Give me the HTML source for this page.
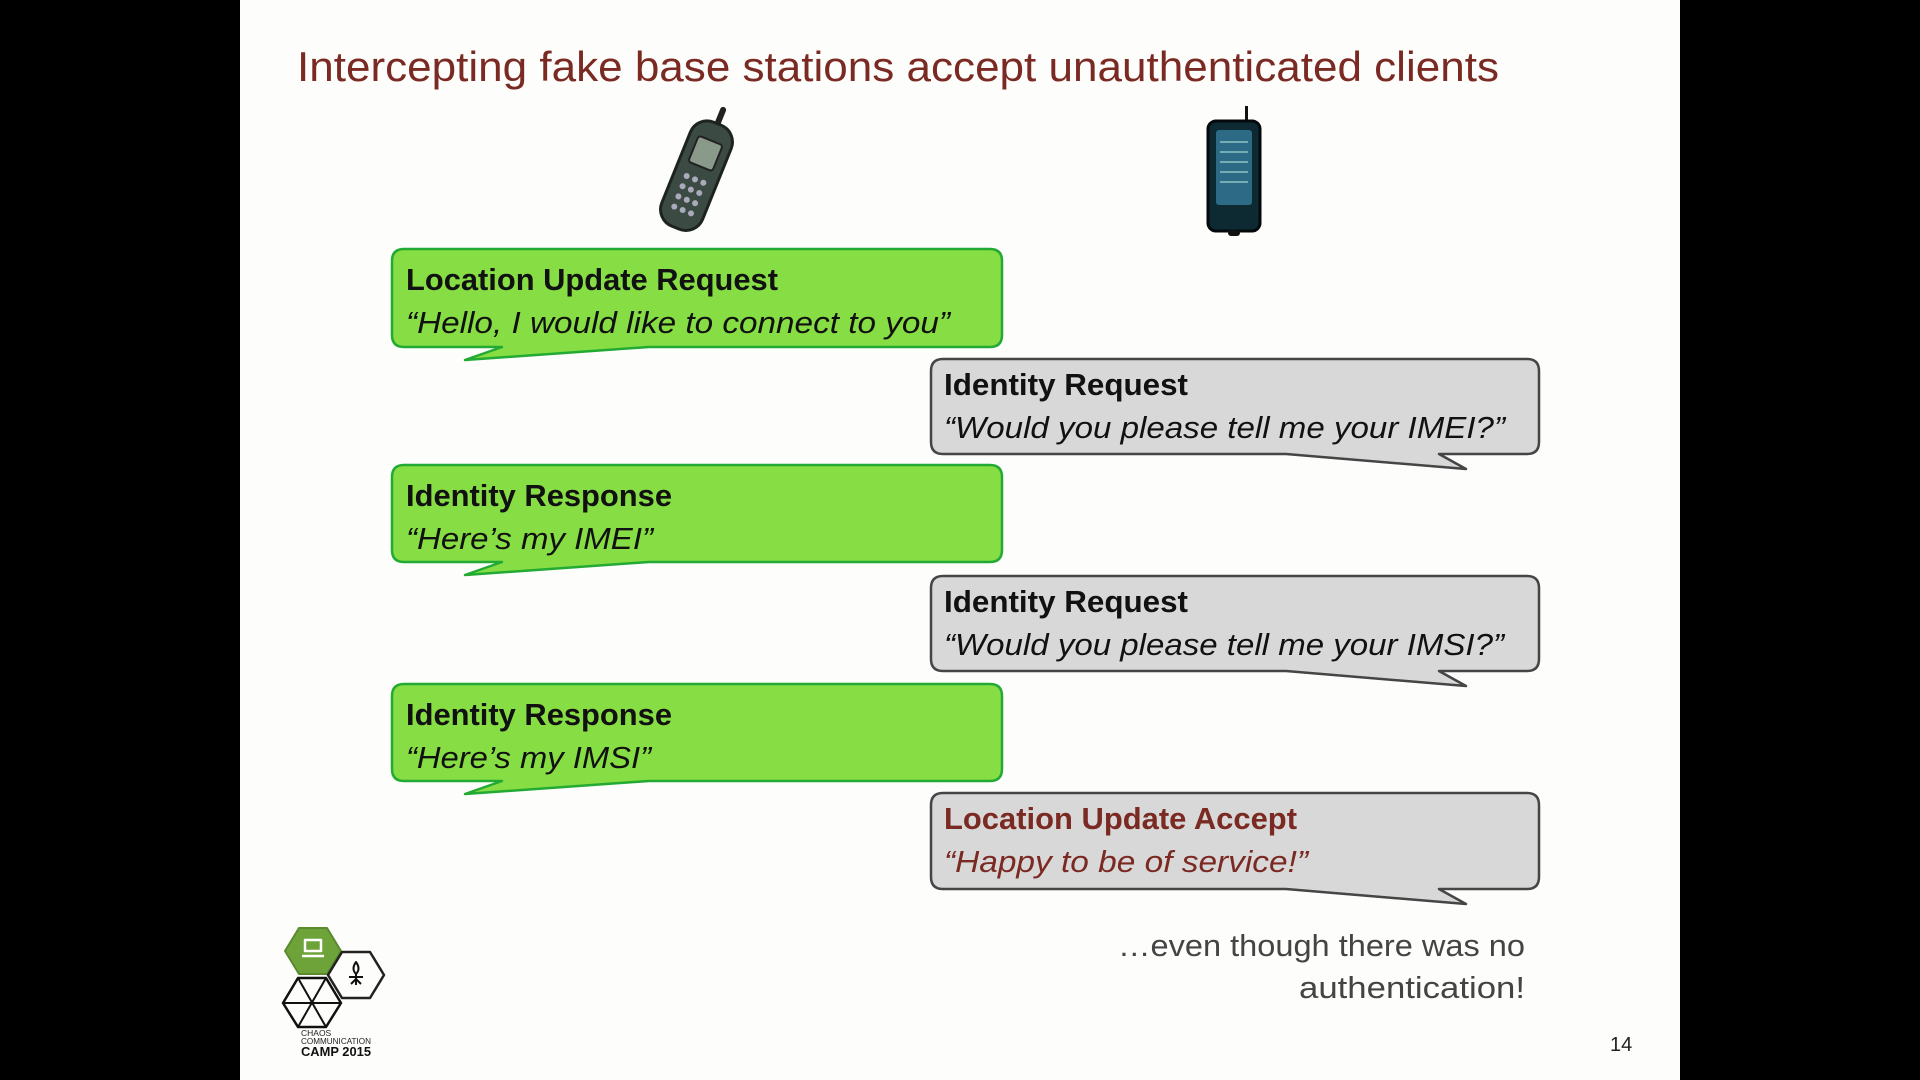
<!DOCTYPE html>
<html><head><meta charset="utf-8"><style>
html,body{margin:0;padding:0;background:#000;width:1920px;height:1080px;overflow:hidden}
svg{display:block}
</style></head><body>
<svg width="1920" height="1080" viewBox="0 0 1920 1080" xmlns="http://www.w3.org/2000/svg" font-family="Liberation Sans, sans-serif">
<rect x="0" y="0" width="1920" height="1080" fill="#000"/>
<rect x="240" y="0" width="1440" height="1080" fill="#fdfdfb"/>
<text x="297" y="81" font-size="42" fill="#7a2a22" textLength="1202" lengthAdjust="spacingAndGlyphs">Intercepting fake base stations accept unauthenticated clients</text>

<g transform="translate(698,172) rotate(22)">
 <rect x="-3" y="-70" width="6" height="30" rx="3" fill="#222"/>
 <rect x="-22" y="-52" width="44" height="112" rx="18" fill="#3c4a44" stroke="#1d2420" stroke-width="3"/>
 <rect x="-13" y="-34" width="26" height="28" rx="3" fill="#8a9a8a" stroke="#222" stroke-width="2"/>
 <g fill="#aab">
  <circle cx="-9" cy="8" r="3"/><circle cx="0" cy="8" r="3"/><circle cx="9" cy="8" r="3"/>
  <circle cx="-9" cy="19" r="3"/><circle cx="0" cy="19" r="3"/><circle cx="9" cy="19" r="3"/>
  <circle cx="-9" cy="30" r="3"/><circle cx="0" cy="30" r="3"/><circle cx="9" cy="30" r="3"/>
  <circle cx="-9" cy="41" r="3"/><circle cx="0" cy="41" r="3"/><circle cx="9" cy="41" r="3"/>
 </g>
</g>
<rect x="1245" y="106" width="3" height="18" fill="#111"/>
<rect x="1208" y="121" width="52" height="110" rx="8" fill="#0d2a33" stroke="#05090b" stroke-width="3"/>
<rect x="1216" y="130" width="36" height="75" rx="3" fill="#2d6a86"/>
<g stroke="#cfe" stroke-width="1.5" opacity=".6">
 <line x1="1220" y1="142" x2="1248" y2="142"/><line x1="1220" y1="152" x2="1248" y2="152"/><line x1="1220" y1="162" x2="1248" y2="162"/><line x1="1220" y1="172" x2="1248" y2="172"/><line x1="1220" y1="182" x2="1248" y2="182"/>
</g>
<rect x="1228" y="230" width="12" height="6" rx="3" fill="#111"/>

<g fill="#86dd44" stroke="#22aa33" stroke-width="2.5" stroke-linejoin="round">
 <path d="M404,249 H990 Q1002,249 1002,261 V335 Q1002,347 990,347 H649 L465,360 L502,347 H404 Q392,347 392,335 V261 Q392,249 404,249 Z"/>
 <path d="M404,465 H990 Q1002,465 1002,477 V550 Q1002,562 990,562 H649 L465,575 L502,562 H404 Q392,562 392,550 V477 Q392,465 404,465 Z"/>
 <path d="M404,684 H990 Q1002,684 1002,696 V769 Q1002,781 990,781 H649 L465,794 L502,781 H404 Q392,781 392,769 V696 Q392,684 404,684 Z"/>
</g>
<g fill="#d8d8d8" stroke="#454545" stroke-width="2.5" stroke-linejoin="round">
 <path d="M943,359 H1527 Q1539,359 1539,371 V442 Q1539,454 1527,454 H1439 L1466,469 L1286,454 H943 Q931,454 931,442 V371 Q931,359 943,359 Z"/>
 <path d="M943,576 H1527 Q1539,576 1539,588 V659 Q1539,671 1527,671 H1439 L1466,686 L1286,671 H943 Q931,671 931,659 V588 Q931,576 943,576 Z"/>
 <path d="M943,793 H1527 Q1539,793 1539,805 V877 Q1539,889 1527,889 H1439 L1466,904 L1286,889 H943 Q931,889 931,877 V805 Q931,793 943,793 Z"/>
</g>

<g font-size="31" fill="#111">
 <text x="406" y="290" font-weight="bold" textLength="372" lengthAdjust="spacingAndGlyphs">Location Update Request</text>
 <text x="406" y="333" font-style="italic" textLength="544" lengthAdjust="spacingAndGlyphs">“Hello, I would like to connect to you”</text>
 <text x="944" y="395" font-weight="bold" textLength="244" lengthAdjust="spacingAndGlyphs">Identity Request</text>
 <text x="944" y="438" font-style="italic" textLength="561" lengthAdjust="spacingAndGlyphs">“Would you please tell me your IMEI?”</text>
 <text x="406" y="506" font-weight="bold" textLength="266" lengthAdjust="spacingAndGlyphs">Identity Response</text>
 <text x="406" y="549" font-style="italic" textLength="247" lengthAdjust="spacingAndGlyphs">“Here’s my IMEI”</text>
 <text x="944" y="612" font-weight="bold" textLength="244" lengthAdjust="spacingAndGlyphs">Identity Request</text>
 <text x="944" y="655" font-style="italic" textLength="560" lengthAdjust="spacingAndGlyphs">“Would you please tell me your IMSI?”</text>
 <text x="406" y="725" font-weight="bold" textLength="266" lengthAdjust="spacingAndGlyphs">Identity Response</text>
 <text x="406" y="768" font-style="italic" textLength="245" lengthAdjust="spacingAndGlyphs">“Here’s my IMSI”</text>
 <text x="944" y="829" font-weight="bold" fill="#7a2a22" textLength="353" lengthAdjust="spacingAndGlyphs">Location Update Accept</text>
 <text x="944" y="872" font-style="italic" fill="#7a2a22" textLength="364" lengthAdjust="spacingAndGlyphs">“Happy to be of service!”</text>
</g>

<g font-size="31" fill="#444">
 <text x="1118" y="956" textLength="407" lengthAdjust="spacingAndGlyphs">…even though there was no</text>
 <text x="1299" y="998" textLength="226" lengthAdjust="spacingAndGlyphs">authentication!</text>
</g>
<text x="1610" y="1051" font-size="20" fill="#222">14</text>

<g stroke-linejoin="round">
 <polygon points="299,928 327,928 341,951 327,974 299,974 285,951" fill="#6ea33a" stroke="#5a8a2c" stroke-width="2"/>
 <rect x="305" y="940" width="16" height="11" fill="none" stroke="#fff" stroke-width="2.5"/>
 <line x1="302" y1="956" x2="324" y2="956" stroke="#fff" stroke-width="2.5"/>
 <polygon points="342,952 370,952 384,975 370,998 342,998 328,975" fill="none" stroke="#222" stroke-width="2.5"/>
 <path d="M356,962 q-5,7 0,12 q5,-5 0,-12 z M349,977 H363 M356,974 V985 M351,984 L356,979 L361,984" fill="none" stroke="#111" stroke-width="2"/>
 <polygon points="298,978 326,978 341,1003 326,1027 298,1027 283,1003" fill="none" stroke="#111" stroke-width="2.5"/>
 <path d="M298,978 L326,1027 M326,978 L298,1027 M283,1003 H341" stroke="#111" stroke-width="2"/>
 <text x="301" y="1036" font-size="8.5" fill="#222">CHAOS</text>
 <text x="301" y="1044" font-size="8.5" fill="#222" textLength="70" lengthAdjust="spacingAndGlyphs">COMMUNICATION</text>
 <text x="301" y="1056" font-size="13" font-weight="bold" fill="#111" textLength="70" lengthAdjust="spacingAndGlyphs">CAMP 2015</text>
</g>
</svg>
</body></html>
